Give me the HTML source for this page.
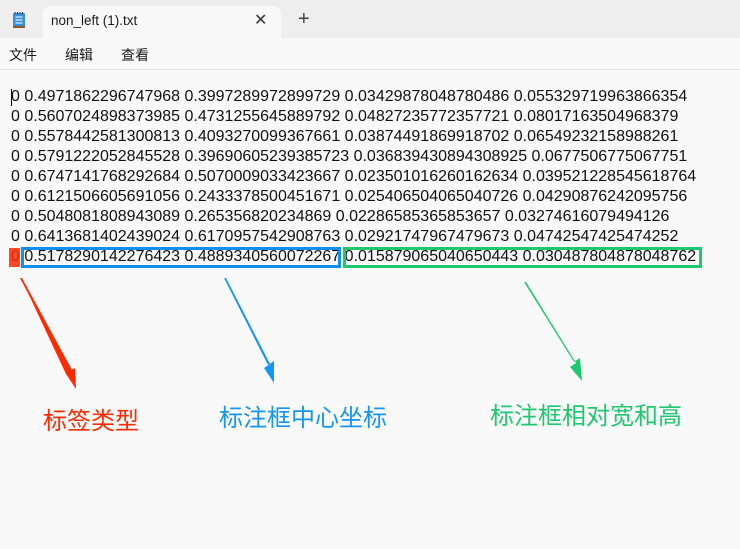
<!DOCTYPE html>
<html><head><meta charset="utf-8"><style>
body{margin:0;width:740px;height:549px;overflow:hidden;background:#f9f9f9;position:relative;font-family:"Liberation Sans","Noto Sans CJK SC",sans-serif}
.top{position:absolute;left:0;top:0;width:740px;height:38px;background:#eeeeee}
.tab{position:absolute;left:43px;top:6px;width:238px;height:32px;background:#f9f9f9;border-radius:8px 8px 0 0}
.menu{position:absolute;left:0;top:38px;width:740px;height:31px;background:#f9f9f9;border-bottom:1px solid #e5e5e5;font-size:14px;color:#1a1a1a}
.menu span{position:absolute;top:7px}
.txt{position:absolute;left:11px;top:87px;font-size:16px;line-height:20px;color:#111;white-space:pre}
.box{position:absolute;border:3px solid}
.lab{position:absolute;font-size:24px;white-space:nowrap}
</style></head><body>
<div class="top"></div>
<div class="tab"></div>
<svg style="position:absolute;left:12px;top:11px" width="14" height="18" viewBox="0 0 14 18"><rect x="1" y="2" width="12" height="15" rx="1.5" fill="#3a8fd6"/><rect x="1" y="15" width="12" height="2" fill="#8a5a2b"/><path d="M3.5 6h7M3.5 9h7M3.5 12h7" stroke="#fff" stroke-width="1"/><path d="M3 1v2M5.5 1v2M8 1v2M10.5 1v2" stroke="#333" stroke-width="1"/></svg>
<div style="position:absolute;left:51px;top:13px;font-size:13.5px;color:#1a1a1a">non_left (1).txt</div>
<div style="position:absolute;left:254px;top:10px;font-size:16px;color:#333">✕</div>
<div style="position:absolute;left:298px;top:8px;font-size:20px;color:#444;font-weight:300">+</div>
<div class="menu"><span style="left:9px">文件</span><span style="left:65px">编辑</span><span style="left:121px">查看</span></div>
<div style="position:absolute;left:11px;top:89px;width:1px;height:17px;background:#000"></div>
<div class="txt">0 0.4971862296747968 0.3997289972899729 0.03429878048780486 0.055329719963866354
0 0.5607024898373985 0.4731255645889792 0.04827235772357721 0.08017163504968379
0 0.5578442581300813 0.4093270099367661 0.03874491869918702 0.06549232158988261
0 0.5791222052845528 0.39690605239385723 0.036839430894308925 0.0677506775067751
0 0.6747141768292684 0.5070009033423667 0.023501016260162634 0.039521228545618764
0 0.6121506605691056 0.2433378500451671 0.025406504065040726 0.04290876242095756
0 0.5048081808943089 0.265356820234869 0.02286585365853657 0.03274616079494126
0 0.6413681402439024 0.6170957542908763 0.02921747967479673 0.04742547425474252
0 0.5178290142276423 0.4889340560072267 0.015879065040650443 0.030487804878048762</div>
<div style="position:absolute;left:9px;top:248px;width:11px;height:19px;background:#ff2a00;opacity:.85"></div>
<div class="box" style="left:21px;top:247px;width:314px;height:15px;border-color:#0f8ff0"></div>
<div class="box" style="left:343px;top:247px;width:353px;height:15px;border-color:#1ec86e"></div>
<svg style="position:absolute;left:0;top:0" width="740" height="549">
<polygon points="20,278 22,278 72,370 66,374 76,389 75,368 69,371" fill="#ff2a00"/>
<polygon points="224,278 226,278 270,364 264,368 274,383 274,361 268,365" fill="#1496f2"/>
<polygon points="524,282 526,282 576,363 570,367 582,381 580,358 574,362" fill="#1ec86e"/>
<polygon points="21,278 72,372 66,374" fill="#ff2a00"/>
</svg>
<div class="lab" style="left:43px;top:401px;color:#ff2a00">标签类型</div>
<div class="lab" style="left:219px;top:398px;color:#1496f2">标注框中心坐标</div>
<div class="lab" style="left:490px;top:396px;color:#1ec86e">标注框相对宽和高</div>
</body></html>
